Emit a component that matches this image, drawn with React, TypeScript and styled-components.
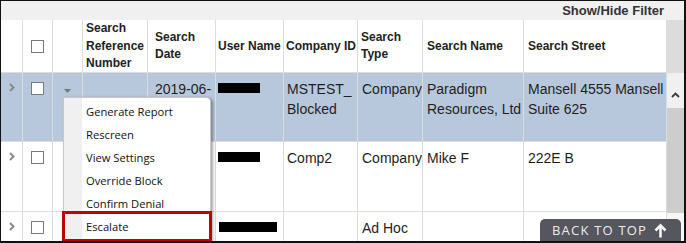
import React from "react";
import styled, { createGlobalStyle } from "styled-components";

const GlobalStyle = createGlobalStyle`
  html, body { margin: 0; padding: 0; background: #fff; }
  body { font-family: "Liberation Sans", Arial, sans-serif; }
`;

const COLS = "22px 30px 30px 65px 68px 68px 74px 65px 101px 143px";
const LINE = "#dcdcdc";

const Frame = styled.div`
  position: relative;
  box-sizing: border-box;
  width: 686px;
  height: 243px;
  border-style: solid;
  border-color: #111;
  border-width: 1px 2px 2px 1px;
  overflow: hidden;
  background: #fff;
`;

const FilterBar = styled.div`
  height: 19px;
  background: #f0f0f0;
  display: flex;
  align-items: center;
  justify-content: flex-end;
  padding-right: 20px;
  font: bold 13px "Liberation Sans", Arial, sans-serif;
  color: #333;
`;

const Body = styled.div`
  display: flex;
`;

const Table = styled.div`
  width: 666px;
  display: flex;
  flex-direction: column;
`;

const Row = styled.div<{ $height: number; $selected?: boolean }>`
  display: grid;
  grid-template-columns: ${COLS};
  height: ${(p) => p.$height}px;
  border-bottom: 1px solid ${LINE};
  background: ${(p) => (p.$selected ? "#b8c8dc" : "#fff")};
`;

const HeadCell = styled.div<{ $pad?: number }>`
  display: flex;
  align-items: center;
  padding-left: ${(p) => p.$pad ?? 3}px;
  border-right: 1px solid ${LINE};
  font-size: 12px;
  font-weight: bold;
  line-height: 17.5px;
  color: #222;
`;

const Cell = styled.div<{ $pad?: number }>`
  padding: 6px 0 0 ${(p) => p.$pad ?? 3}px;
  border-right: 1px solid ${LINE};
  font-size: 14px;
  line-height: 20px;
  color: #1e1e1e;
  overflow: hidden;
`;

const CenterCell = styled.div<{ $top?: number }>`
  display: flex;
  justify-content: center;
  padding-top: ${(p) => p.$top ?? 9}px;
  border-right: 1px solid ${LINE};
`;

const MiddleCell = styled.div`
  display: flex;
  justify-content: center;
  align-items: center;
  border-right: 1px solid ${LINE};
`;

const Checkbox = styled.span`
  display: block;
  box-sizing: border-box;
  width: 13px;
  height: 13px;
  border: 1px solid #7a7a7a;
  background: #fff;
`;

const Redacted = styled.span<{ $w: number }>`
  display: block;
  width: ${(p) => p.$w}px;
  height: 10px;
  margin-top: 4px;
  background: #000;
`;

const Scrollbar = styled.div`
  width: 17px;
  display: flex;
  flex-direction: column;
`;

const ScrollCorner = styled.div`
  height: 53px;
  background: #dcdcdc;
`;

const ScrollArrow = styled.div`
  height: 35px;
  background: #f0f0f0;
  display: flex;
  justify-content: center;
  padding-top: 19px;
  box-sizing: border-box;
`;

const ScrollThumb = styled.div`
  height: 105px;
  background: #cdcdcd;
`;

const ScrollTrack = styled.div`
  flex: 1;
  background: #f7f7f7;
`;

const Menu = styled.div`
  position: absolute;
  left: 62px;
  top: 96px;
  width: 148px;
  height: 160px;
  box-sizing: border-box;
  padding-top: 2px;
  background: linear-gradient(to right, #f0f0f0 0, #f0f0f0 18px, #fff 18px);
  border: 1px solid #c8c8c8;
  border-radius: 0 5px 0 0;
  box-shadow: 2px 1px 3px rgba(0, 0, 0, 0.35);
`;

const MenuItem = styled.div<{ $marked?: boolean }>`
  height: 23px;
  display: flex;
  align-items: center;
  padding-left: 22px;
  font-family: "Open Sans", "Noto Sans", sans-serif;
  font-size: 11.2px;
  color: #111;
  position: relative;
  ${(p) =>
    p.$marked &&
    `
    &::after {
      content: "";
      position: absolute;
      left: -2px;
      right: -2px;
      top: -4px;
      bottom: -4px;
      border: 3px solid #c00000;
    }
  `}
`;

const BackToTop = styled.div`
  position: absolute;
  right: 3px;
  bottom: 0;
  width: 141px;
  height: 22px;
  box-sizing: border-box;
  padding-left: 12px;
  display: flex;
  align-items: center;
  gap: 7px;
  background: #56565e;
  border-radius: 5px 5px 0 0;
  color: #ececec;
  font-family: "Open Sans", sans-serif;
  font-size: 13px;
  letter-spacing: 1.2px;
`;

const Chevron = () => (
  <svg width="6" height="9" viewBox="0 0 6 9">
    <path d="M1 1 L4.5 4.5 L1 8" fill="none" stroke="#8a8a8a" strokeWidth="2" />
  </svg>
);

const Caret = () => (
  <svg width="7" height="4" viewBox="0 0 7 4">
    <path d="M0 0 H7 L3.5 4 Z" fill="#7a7a7a" />
  </svg>
);

const UpCaret = () => (
  <svg width="9" height="6" viewBox="0 0 9 6">
    <path d="M1 5 L4.5 1.5 L8 5" fill="none" stroke="#3a3a3a" strokeWidth="1.8" />
  </svg>
);

const UpArrow = () => (
  <svg width="13" height="15" viewBox="0 0 13 15">
    <path d="M6.5 14.5 V2.5 M1.5 7.5 L6.5 2.3 L11.5 7.5" fill="none" stroke="#f4f4f4" strokeWidth="2.6" />
  </svg>
);

const menuItems = ["Generate Report", "Rescreen", "View Settings", "Override Block", "Confirm Denial"];

const App: React.FC = () => (
  <>
    <GlobalStyle />
    <Frame>
      <FilterBar>Show/Hide Filter</FilterBar>
      <Body>
        <Table>
          <Row $height={52}>
            <HeadCell />
            <MiddleCell>
              <Checkbox />
            </MiddleCell>
            <HeadCell />
            <HeadCell>
              Search
              <br />
              Reference
              <br />
              Number
            </HeadCell>
            <HeadCell $pad={7}>
              Search
              <br />
              Date
            </HeadCell>
            <HeadCell $pad={2}>User Name</HeadCell>
            <HeadCell $pad={2}>Company ID</HeadCell>
            <HeadCell>
              Search
              <br />
              Type
            </HeadCell>
            <HeadCell $pad={4}>Search Name</HeadCell>
            <HeadCell $pad={4}>Search Street</HeadCell>
          </Row>
          <Row $height={68} $selected>
            <CenterCell $top={10}>
              <Chevron />
            </CenterCell>
            <CenterCell>
              <Checkbox />
            </CenterCell>
            <CenterCell $top={16}>
              <Caret />
            </CenterCell>
            <Cell />
            <Cell $pad={7}>2019-06-</Cell>
            <Cell $pad={2}>
              <Redacted $w={42} />
            </Cell>
            <Cell>
              MSTEST_
              <br />
              Blocked
            </Cell>
            <Cell $pad={4}>Company</Cell>
            <Cell $pad={4}>
              Paradigm
              <br />
              Resources, Ltd
            </Cell>
            <Cell $pad={4}>
              Mansell 4555 Mansell
              <br />
              Suite 625
            </Cell>
          </Row>
          <Row $height={69}>
            <CenterCell $top={10}>
              <Chevron />
            </CenterCell>
            <CenterCell>
              <Checkbox />
            </CenterCell>
            <Cell />
            <Cell />
            <Cell $pad={7} />
            <Cell $pad={2}>
              <Redacted $w={42} />
            </Cell>
            <Cell>Comp2</Cell>
            <Cell $pad={4}>Company</Cell>
            <Cell $pad={4}>Mike F</Cell>
            <Cell $pad={4}>222E B</Cell>
          </Row>
          <Row $height={40}>
            <CenterCell $top={10}>
              <Chevron />
            </CenterCell>
            <CenterCell>
              <Checkbox />
            </CenterCell>
            <Cell />
            <Cell />
            <Cell $pad={7} />
            <Cell $pad={3}>
              <Redacted $w={58} />
            </Cell>
            <Cell />
            <Cell $pad={4}>Ad Hoc</Cell>
            <Cell $pad={4} />
            <Cell $pad={4} />
          </Row>
        </Table>
        <Scrollbar>
          <ScrollCorner />
          <ScrollArrow>
            <UpCaret />
          </ScrollArrow>
          <ScrollThumb />
          <ScrollTrack />
        </Scrollbar>
      </Body>
      <Menu>
        {menuItems.map((label) => (
          <MenuItem key={label}>{label}</MenuItem>
        ))}
        <MenuItem $marked>Escalate</MenuItem>
      </Menu>
      <BackToTop>
        BACK TO TOP
        <UpArrow />
      </BackToTop>
    </Frame>
  </>
);

export default App;
